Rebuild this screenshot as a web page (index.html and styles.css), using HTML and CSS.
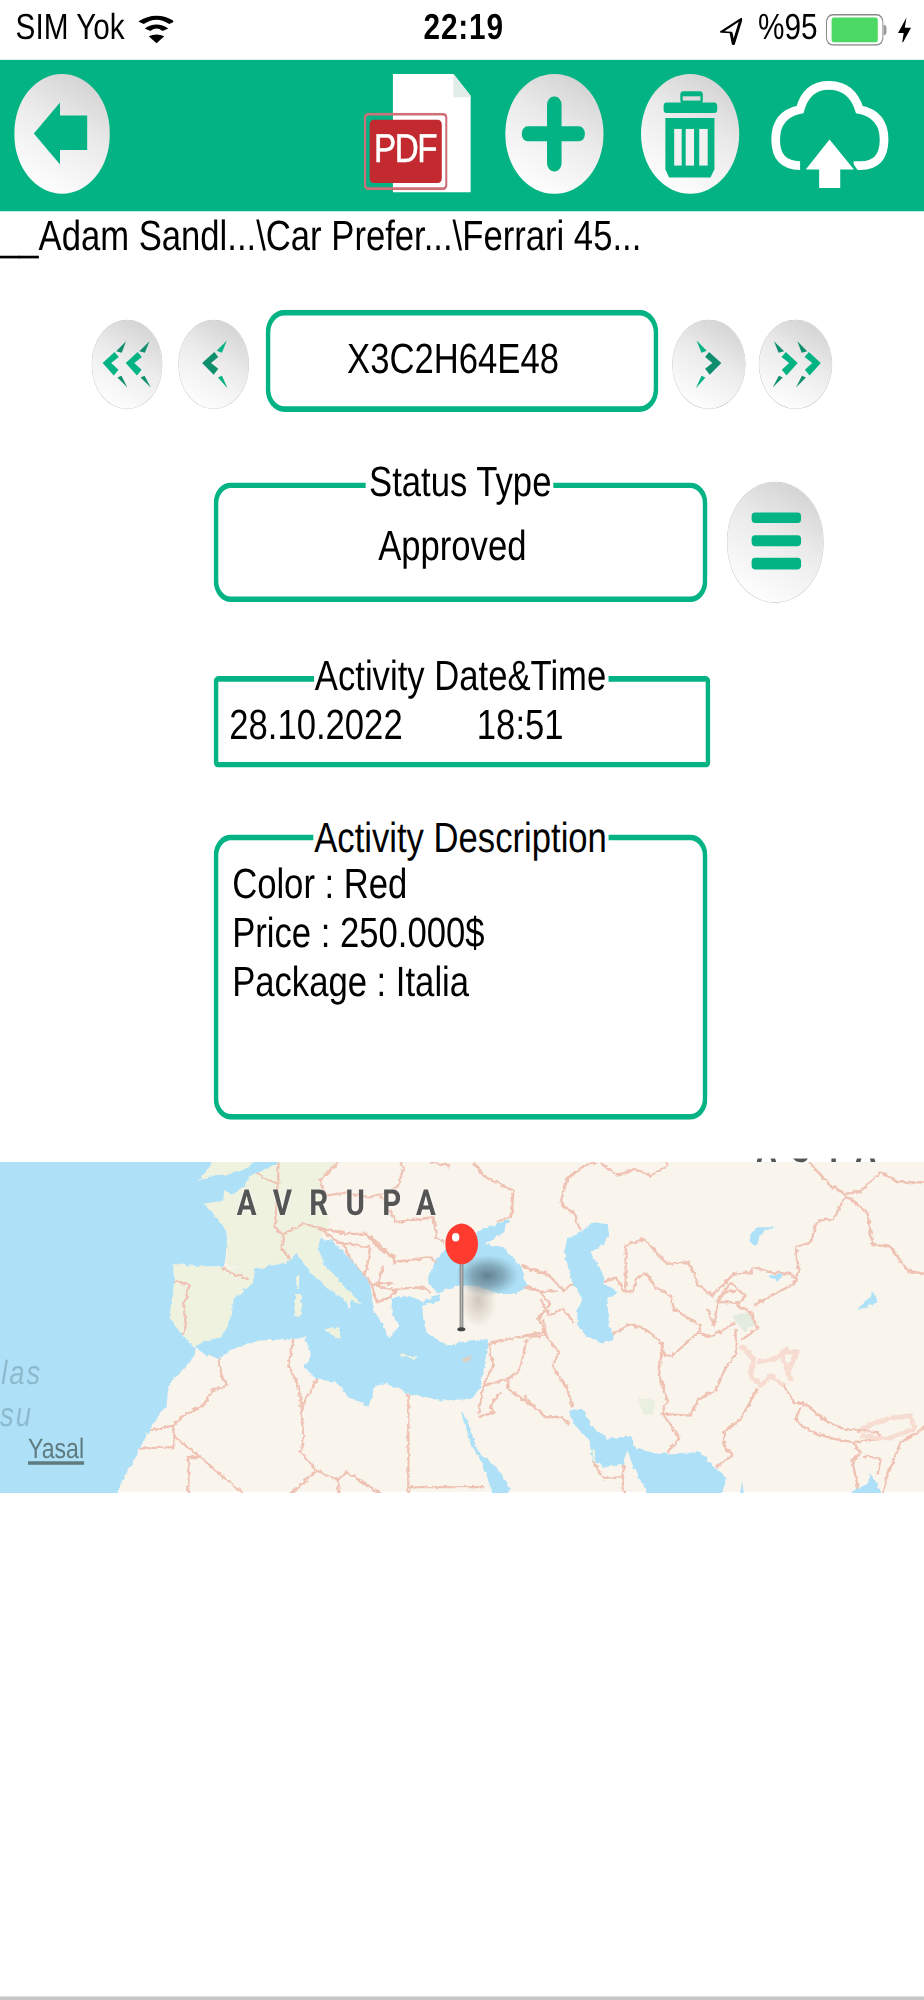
FILE: index.html
```html
<!DOCTYPE html>
<html lang="en">
<head>
<meta charset="utf-8">
<title>Activity</title>
<link rel="stylesheet" href="styles.css">
</head>
<body>
<div class="screen">
  <header class="statusbar">
    <div class="sb-left">
      <span>SIM Yok</span>
      <svg class="wifi" viewBox="0 0 60 90" preserveAspectRatio="none"><path d="M4 26Q30 -4 56 26M15 47Q30 28 45 47" fill="none" stroke="#000" stroke-width="12"/><path d="M30 88L17 67Q30 56 43 67Z"/></svg>
    </div>
    <div class="sb-clock">22:19</div>
    <div class="sb-right">
      <svg class="locarrow" viewBox="0 0 40 85" preserveAspectRatio="none"><path d="M37 4L4 43L20 45L24 80Z" fill="none" stroke="#000" stroke-width="5" stroke-linejoin="round"/></svg>
      <span class="pct">%95</span>
      <div class="batt"><div class="batt-fill"></div></div>
      <div class="batt-nub"></div>
      <svg class="bolt" viewBox="0 0 23 80" preserveAspectRatio="none"><path d="M15 0L0 46H10L7 80L23 30H12Z"/></svg>
    </div>
  </header>

  <nav class="topbar">
    <button class="orb orb-lg" type="button">
      <svg viewBox="0 0 100 100" preserveAspectRatio="none"><polygon class="g" points="20,50 47,24 47,35 75,35 75,64 47,64 47,76"/></svg>
    </button>
    <div class="tools">
      <div class="pdf">
        <svg class="pdf-doc" viewBox="0 0 238 355" preserveAspectRatio="none"><polygon fill="#fff" points="0,0 183,0 238,70 238,355 0,355"/><polygon fill="#e0ece8" points="183,0 238,70 183,70"/></svg>
        <div class="pdf-badge"><span class="pdf-label">PDF</span></div>
      </div>
      <button class="orb orb-lg" type="button">
        <svg viewBox="0 0 100 100" preserveAspectRatio="none"><rect class="g" x="43" y="19" width="15" height="63" rx="7"/><rect class="g" x="17" y="44" width="65" height="12.6" rx="6"/></svg>
      </button>
      <button class="orb orb-lg orb-trash" type="button">
        <svg viewBox="0 0 100 100" preserveAspectRatio="none"><rect class="g" x="40" y="14.6" width="23" height="10.4" rx="3"/><rect x="42.5" y="18.8" width="18" height="3.6" fill="#dcdcdc"/><rect class="g" x="23" y="24" width="54.6" height="8.8" rx="3"/><polygon class="g" points="24.8,37 74.8,37 74.8,80 70.7,87 28.6,87 24.8,80"/><rect x="33.8" y="46.2" width="7.6" height="30.8" fill="#f1f1f1"/><rect x="45.5" y="46.2" width="8.5" height="30.8" fill="#f1f1f1"/><rect x="59.3" y="46.2" width="8.6" height="30.8" fill="#f1f1f1"/></svg>
      </button>
      <svg class="cloud" viewBox="0 0 352 320" preserveAspectRatio="none"><path d="M87 253Q14 253 14 175Q14 100 87 85Q107 13 172 13Q242 13 264 85Q338 100 338 175Q338 253 267 253H247" fill="none" stroke="#fff" stroke-width="26"/><polygon fill="#03b384" points="175,155 88,270 262,270"/><polygon fill="#fff" points="175,175 104,265 144,265 144,320 207,320 207,265 248,265"/></svg>
    </div>
  </nav>

  <div class="crumbs">__Adam Sandl...\Car Prefer...\Ferrari 45...</div>

  <section class="pager">
    <button class="orb orb-sm" type="button">
      <svg viewBox="35 28 217 262" preserveAspectRatio="none"><polygon class="g" points="66,155 102,122 115,137 92,155 114,175 100,192"/><polygon class="g" points="136,155 172,122 185,137 162,155 184,175 170,192"/><polygon class="d" points="107,120 137,90 124,124"/><polygon class="d" points="177,120 208,90 194,124"/><polygon class="d" points="111,198 123,193 141,228"/><polygon class="d" points="181,198 193,193 212,228"/></svg>
    </button>
    <button class="orb orb-sm" type="button">
      <svg viewBox="295 28 217 262" preserveAspectRatio="none"><polygon class="d" points="365,155 402,122 414,137 392,155 414,172 400,190"/><polygon class="g" points="409,118 440,88 425,124"/><polygon class="g" points="413,198 425,193 442,230"/></svg>
    </button>
    <div class="code-box">X3C2H64E48</div>
    <button class="orb orb-sm flip" type="button">
      <svg viewBox="295 28 217 262" preserveAspectRatio="none"><polygon class="d" points="365,155 402,122 414,137 392,155 414,172 400,190"/><polygon class="g" points="409,118 440,88 425,124"/><polygon class="g" points="413,198 425,193 442,230"/></svg>
    </button>
    <button class="orb orb-sm flip" type="button">
      <svg viewBox="35 28 217 262" preserveAspectRatio="none"><polygon class="g" points="66,155 102,122 115,137 92,155 114,175 100,192"/><polygon class="g" points="136,155 172,122 185,137 162,155 184,175 170,192"/><polygon class="d" points="107,120 137,90 124,124"/><polygon class="d" points="177,120 208,90 194,124"/><polygon class="d" points="111,198 123,193 141,228"/><polygon class="d" points="181,198 193,193 212,228"/></svg>
    </button>
  </section>

  <section class="status-row">
    <div class="field field-status">
      <span class="legend">Status Type</span>
      <div class="status-value">Approved</div>
    </div>
    <button class="orb orb-menu" type="button">
      <svg viewBox="0 0 100 100" preserveAspectRatio="none"><rect class="g" x="24.7" y="25.6" width="51" height="9" rx="3.5"/><rect class="g" x="24.7" y="44.9" width="51" height="9.4" rx="3.5"/><rect class="g" x="24.7" y="64" width="51" height="10" rx="3.5"/></svg>
    </button>
  </section>

  <section class="field field-date">
    <span class="legend">Activity Date&amp;Time</span>
    <div class="date-value"><span>28.10.2022</span><span>18:51</span></div>
  </section>

  <section class="field field-desc">
    <span class="legend">Activity Description</span>
    <div class="desc-line">Color : Red</div>
    <div class="desc-line">Price : 250.000$</div>
    <div class="desc-line">Package : Italia</div>
  </section>

  <section class="map">
    <svg class="map-art" viewBox="0 0 2772 990" preserveAspectRatio="none">
      <defs>
        <filter id="rough" filterUnits="userSpaceOnUse" x="-20" y="-20" width="2812" height="1030">
          <feTurbulence type="fractalNoise" baseFrequency=".07" numOctaves="2" seed="4" result="n"/>
          <feDisplacementMap in="SourceGraphic" in2="n" scale="14" xChannelSelector="R" yChannelSelector="G"/>
        </filter>
        <radialGradient id="shadowSea"><stop offset="0" stop-color="#55707c" stop-opacity=".85"/><stop offset=".5" stop-color="#5f7d8a" stop-opacity=".55"/><stop offset="1" stop-color="#6f8f9c" stop-opacity="0"/></radialGradient>
        <radialGradient id="shadowLand"><stop offset="0" stop-color="#a39a8c" stop-opacity=".5"/><stop offset="1" stop-color="#a39a8c" stop-opacity="0"/></radialGradient>
        <linearGradient id="stem" x1="0" x2="1" y1="0" y2="0"><stop offset="0" stop-color="#777"/><stop offset=".5" stop-color="#b5b5b5"/><stop offset="1" stop-color="#777"/></linearGradient>
      </defs>
      <rect width="2772" height="990" fill="#f9f4ec"/>
      <g filter="url(#rough)">
        <g transform="translate(450,-9)">
          <g fill="#eef2df">
            <polygon points="160,135 220,125 222,95 250,105 280,85 300,50 385,10 560,10 510,70 525,130 540,200 510,240 505,270 525,320 575,375 635,435 590,430 530,385 480,340 440,285 410,310 370,320 315,330 230,320 232,220 195,170"/>
            <polygon points="70,315 315,330 310,370 250,420 245,470 215,535 165,545 135,565 95,525 58,475 72,370"/>
          </g>
          <g class="borders">
            <polyline points="215,325 250,345 300,360"/>
            <polyline points="70,365 120,378 100,440 108,500 95,530"/>
            <polyline points="305,30 340,55 385,75"/>
            <polyline points="385,10 385,80 380,130 375,190 380,215 400,225 395,270 420,300"/>
            <polyline points="565,10 510,65 530,110 590,100 660,115 740,90 760,30 750,10"/>
            <polyline points="970,10 1000,50 1090,95 1085,170 1040,190"/>
            <polyline points="840,10 900,20"/>
            <polyline points="400,225 460,195 520,210 590,225 650,225 690,270 735,295 730,310 840,295 860,310"/>
            <polyline points="510,205 560,250 660,265 650,330 640,350"/>
            <polyline points="580,255 600,300 640,350 665,375 730,375"/>
            <polyline points="660,230 730,300"/>
            <polyline points="665,375 680,430 720,415 740,390 820,385 840,400"/>
            <polyline points="700,320 680,380 740,395"/>
            <polyline points="690,110 740,190 850,175 860,240 885,250"/>
            <polyline points="1130,380 1165,395 1200,435 1165,480 1190,530 1100,535 1015,555"/>
            <polyline points="1115,320 1200,350"/>
            <polyline points="205,598 215,650 232,680 185,695 165,735 100,770 70,800 0,815"/>
            <polyline points="70,800 70,865 -60,870"/>
            <polyline points="70,830 150,895 280,1005"/>
            <polyline points="150,895 115,895 115,1005"/>
            <polyline points="430,540 415,620 445,680 455,750 460,850 450,880 500,935 420,1005"/>
            <polyline points="500,935 565,965 590,940 690,1005"/>
            <polyline points="565,965 565,1005"/>
            <polyline points="500,660 455,745"/>
            <polyline points="775,705 775,1005"/>
            <polyline points="775,985 1000,985"/>
            <polyline points="1015,555 1030,620 1000,680 985,765"/>
            <polyline points="1130,540 1110,630 1075,660 1000,680"/>
            <polyline points="1075,660 1075,690 1200,780"/>
            <polyline points="1050,700 1020,745 1035,760 985,775"/>
          </g>
          <g class="water">
            <polygon points="-460,-20 385,-20 385,10 350,30 300,50 280,85 250,105 222,95 220,125 160,135 195,170 232,220 225,322 150,322 70,315 72,370 58,475 95,525 130,562 138,575 120,610 85,645 55,680 50,740 0,810 -105,1010 -460,1010"/>
            <polygon points="135,565 165,545 215,535 245,470 250,420 310,370 315,330 370,320 410,310 440,285 480,340 530,385 590,430 605,470 590,505 600,450 600,420 635,435 575,375 525,320 505,270 510,240 545,245 610,310 660,375 672,455 700,500 715,540 735,520 745,490 725,470 725,420 770,410 815,425 820,480 830,520 890,560 960,545 1015,540 1005,610 990,690 965,720 880,725 780,705 710,675 675,680 655,745 590,710 560,670 500,660 460,625 485,590 465,535 430,540 330,545 260,565 205,598 170,590"/>
            <polygon points="835,350 860,300 890,265 960,250 985,215 1080,180 1060,220 1005,255 1060,265 1110,320 1132,380 1100,405 1050,405 990,382 930,378 860,402 835,375"/>
            <polygon points="805,435 870,405 870,425 820,440"/>
            <polygon points="932,755 945,770 985,880 1040,925 1078,985 1078,1010 1030,1010 1000,920 960,850"/>
          </g>
          <g class="land">
            <polygon points="145,65 175,30 195,-10 330,-10 290,30 240,45 190,50"/>
            <polygon points="438,350 448,350 447,390 440,390"/>
            <polygon points="436,405 452,405 455,470 432,470"/>
            <polygon points="520,510 570,505 570,540"/>
            <polygon points="750,585 800,595 795,600 755,592"/>
          </g>
        </g>
        <g transform="translate(1572,-9)">
          <polygon fill="#e2ebdd" points="625,470 680,460 695,490 660,520"/>
          <polygon fill="#e9f0e0" points="340,715 395,725 385,770 360,770"/>
          <g class="borders">
            <polyline points="170,215 150,165 110,130 130,60 180,20 220,10"/>
            <polyline points="230,10 280,50 330,30 380,50 430,20 425,5"/>
            <polyline points="850,5 920,80 965,105 1010,95 1070,40 1120,70 1205,70"/>
            <polyline points="965,110 930,180 880,185 860,250 815,265 825,340 810,375 730,415 690,440"/>
            <polyline points="965,110 1030,160 1045,255 1100,265 1150,335 1205,345"/>
            <polyline points="305,400 305,260 360,240 430,315 495,310 525,380 565,410 630,345 680,340 690,325 740,340 800,345 820,365"/>
            <polyline points="240,370 275,355 300,400 330,395 335,360 365,340 395,385 440,410 450,450 530,500 525,520 560,535 620,500 635,490"/>
            <polyline points="265,525 320,495 370,515 415,555 420,590 445,590 490,550 525,520"/>
            <polyline points="415,555 405,650 430,720 415,765 500,770 525,720 575,695 600,635 635,585 635,510"/>
            <polyline points="415,765 455,820 465,840 430,880"/>
            <polyline points="550,450 570,500 580,430 620,370 665,410 640,440 680,460 700,510 650,545"/>
            <polyline points="575,430 650,430"/>
            <polyline points="600,400 640,395"/>
            <polyline points="700,690 650,780 600,820 600,860 625,890 575,925"/>
            <polyline points="780,680 810,730 850,740 910,790 960,810 1000,815 1060,820 1070,840 985,850 930,840 880,825 830,800 815,780 830,745"/>
            <polyline points="1205,800 1175,825 1130,850 1090,950 1075,1005"/>
            <polyline points="985,850 1010,880 985,905 1005,1005"/>
            <polyline points="1020,890 1070,900 1060,950"/>
            <polyline points="0,325 70,345 120,395 150,370"/>
            <polyline points="0,385 50,400 100,395"/>
            <polyline points="50,420 75,470 115,450 150,490"/>
            <polyline points="60,480 65,530 105,580 85,620 130,690 145,745"/>
            <polyline points="0,530 60,520"/>
            <polyline points="0,710 60,775 115,775 135,800"/>
            <polyline points="205,905 240,960 295,955 300,915"/>
            <polyline points="295,955 300,1005"/>
          </g>
          <g class="borders-wide">
            <polyline points="650,560 690,600 680,650 710,680 740,650 780,680"/>
            <polyline points="770,580 820,580 790,640 800,660 770,580"/>
            <polyline points="700,610 750,600 790,570"/>
            <polyline points="1010,810 1090,780 1160,770 1170,810 1090,840 1010,830"/>
          </g>
          <g class="water">
            <polygon points="170,220 205,190 250,195 255,225 240,255 200,280 235,345 240,375 285,400 250,420 255,500 270,540 230,552 185,530 160,500 160,460 175,420 145,370 120,280 130,240"/>
            <polygon points="675,230 700,205 755,205 720,215 695,265 680,250"/>
            <polygon points="730,350 780,345 760,368"/>
            <polygon points="1000,455 1050,400 1062,430"/>
            <polygon points="135,760 175,745 200,800 250,840 320,830 335,870 400,885 530,880 570,925 610,960 590,1010 375,1010 330,930 310,875 300,915 240,925 205,905 195,840 150,800"/>
            <polygon points="645,1010 655,970 660,1010"/>
            <polygon points="960,1010 1030,975 1040,945 1065,985 1075,1010"/>
          </g>
          <polygon class="land" points="205,870 213,875 213,910 207,905"/>
        </g>
      </g>
      <g transform="translate(450,-9)">
        <polygon fill="#d8d0c4" points="935,600 965,588 960,605 942,612"/>
        <ellipse cx="985" cy="425" rx="55" ry="80" fill="url(#shadowLand)"/>
        <ellipse cx="1012" cy="350" rx="95" ry="62" fill="url(#shadowSea)"/>
        <rect x="929" y="315" width="11" height="195" fill="url(#stem)"/>
        <ellipse cx="934" cy="511" rx="12" ry="6" fill="#444"/>
        <ellipse cx="935" cy="255" rx="49" ry="61" fill="#ff3b2f"/>
        <ellipse cx="917" cy="235" rx="11" ry="13" fill="#fff"/>
      </g>
    </svg>
    <span class="label-continent label-avrupa">AVRUPA</span>
    <div class="asya-clip"><span class="label-continent label-asya">ASYA</span></div>
    <span class="label-ocean label-las">las</span>
    <span class="label-ocean label-su">su</span>
    <span class="legal">Yasal</span>
  </section>

  <div class="spacer"></div>
  <div class="bottom-edge"></div>
</div>
</body>
</html>
```
FILE: styles.css
```css
* { box-sizing: border-box; }
html {
  background: #fff;
}
body {
  margin: 0;
  padding: 0;
  width: 924px;
  height: 2000px;
  overflow: hidden;
}
.screen {
  width: 320px;
  height: 568px;
  display: flex;
  flex-direction: column;
  font-family: "Liberation Sans", Arial, sans-serif;
  font-size: 12px;
  line-height: 14px;
  color: #000;
  text-rendering: geometricPrecision;
  transform: scale(2.8875, 3.5211);
  transform-origin: 0 0;
}

/* status bar */
.statusbar {
  height: 17px;
  display: grid;
  grid-template-columns: 1fr auto 1fr;
  align-items: center;
  padding: 0 4.2px 0 5.4px;
  font-size: 10.3px;
  line-height: 12px;
}
.sb-left { display: flex; align-items: center; gap: 4.6px; }
.wifi { width: 12.4px; height: 8.5px; }
.sb-clock { font-weight: 700; letter-spacing: .3px; }
.sb-right { display: flex; align-items: center; justify-content: flex-end; }
.locarrow { width: 8.3px; height: 8px; margin-right: 5.4px; }
.pct { margin-right: 3px; }
.batt {
  width: 19.4px;
  height: 9.4px;
  padding: 1.6px 1.4px;
  border-radius: 2.4px;
  box-shadow: inset 0 0 0 .4px #8a8a8a;
}
.batt-fill { height: 100%; background: #4cd964; border-radius: .8px; }
.batt-nub { width: 1px; height: 3.4px; background: #999; margin-left: .4px; margin-right: 4.4px; border-radius: 0 1px 1px 0; }
.bolt { width: 4.5px; height: 7.6px; }

/* top bar */
.topbar {
  height: 42.6px;
  background: #03b384;
  display: flex;
  align-items: flex-start;
  padding: 4.3px 11.8px 0 4.5px;
}
.tools { margin-left: auto; display: flex; align-items: flex-start; }
.orb {
  display: block;
  margin: 0;
  padding: 0;
  border: 0;
  border-radius: 50%;
  background: linear-gradient(205deg, #d2d2d2 8%, #ebebeb 45%, #fff 92%);
}
.orb svg { display: block; width: 100%; height: 100%; }
.orb .g { fill: #03b384; }
.orb .d { fill: #0f8f6e; }
.orb-lg { width: 33.6px; height: 33.8px; }
.orb-sm { width: 24.8px; height: 25px; margin-top: 1.4px; box-shadow: 0 0 0 .2px #c4c4c4; }
.orb-menu { width: 33.6px; height: 33.4px; margin-top: .4px; box-shadow: 0 0 0 .2px #c4c4c4; flex: none; }
.flip svg { transform: scaleX(-1); }
.orb-trash { margin-left: 13.5px; width: 34px; }
.cloud { width: 40.8px; height: 30.4px; margin: 2px 0 0 11.4px; }

.pdf { position: relative; width: 37.8px; height: 33.6px; margin-right: 11.8px; }
.pdf-doc { position: absolute; left: 10.4px; top: 0; width: 27.4px; height: 33.6px; }
.pdf-badge {
  position: absolute;
  left: .6px;
  top: 10.5px;
  width: 28.8px;
  height: 22px;
  padding: 2px;
  border-radius: 1.6px;
  box-shadow: inset 0 0 0 .8px #cf6f78;
  display: flex;
}
.pdf-label {
  flex: 1;
  background: #c22a30;
  border-radius: 1.4px;
  color: #fff;
  font-size: 11.5px;
  line-height: 18px;
  letter-spacing: -.5px;
  text-align: center;
  -webkit-text-stroke: .15px #fff;
}

/* breadcrumb */
.crumbs {
  height: 28.2px;
  padding-top: .4px;
  white-space: nowrap;
}

/* pager */
.pager {
  height: 29.6px;
  display: flex;
  align-items: center;
  gap: 5.2px;
  padding-left: 31.7px;
}
.code-box {
  width: 136px;
  height: 29.6px;
  border-radius: 6.5px;
  box-shadow: inset 0 0 0 1.6px #03b384;
  text-align: center;
  line-height: 29.6px;
  padding-right: 5.5px;
}

/* fields */
.field {
  position: relative;
  border-radius: 6px;
  box-shadow: inset 0 0 0 1.6px #03b384;
}
.legend {
  position: absolute;
  left: 50%;
  top: -6.8px;
  transform: translateX(-50%);
  background: #fff;
  padding: 0 .8px;
  white-space: nowrap;
}
.status-row {
  margin: 19.6px 0 0 74px;
  display: flex;
  align-items: flex-start;
  gap: 7.1px;
}
.field-status { width: 170.8px; height: 33.8px; padding: 11.1px 5.5px 0 0; text-align: center; }
.field-date {
  width: 172px;
  height: 26.4px;
  margin: 21px 0 0 73.5px;
  border-radius: 1.6px;
  padding: 7.2px 0 0 5.9px;
}
.date-value { display: flex; gap: 25.7px; }
.field-desc {
  width: 171px;
  height: 80.7px;
  margin: 19.3px 0 0 74px;
  padding: 6.6px 0 0 6.4px;
}
.desc-line { line-height: 14.2px; }

/* map */
.map {
  position: relative;
  height: 93.7px;
  margin-top: 11.9px;
}
.map-art { display: block; width: 100%; height: 100%; filter: blur(.2px); }
.borders polyline { fill: none; stroke: #efc2b3; stroke-width: 7; stroke-linejoin: round; }
.borders-wide polyline { fill: none; stroke: #f7dcd1; stroke-width: 14; stroke-linejoin: round; }
.water { fill: #aee1f7; }
.land { fill: #f0f2e0; }
.label-continent {
  position: absolute;
  font-family: Roboto, "Liberation Sans", sans-serif;
  font-weight: 700;
  font-size: 10.2px;
  line-height: 10.2px;
  letter-spacing: 6px;
  color: #555;
  text-shadow: 0 0 1px #fff;
}
.label-avrupa { left: 82px; top: 8.4px; }
.asya-clip {
  position: absolute;
  left: 262px;
  top: -1.5px;
  width: 50px;
  height: 3.3px;
  overflow: hidden;
}
.label-asya { left: 0; top: -5.3px; letter-spacing: 5.2px; }
.label-ocean {
  position: absolute;
  font-style: italic;
  font-size: 9.5px;
  line-height: 10px;
  letter-spacing: .7px;
  color: #8db9cc;
}
.label-las { left: .4px; top: 55.6px; }
.label-su { left: 0; top: 67.5px; }
.legal {
  position: absolute;
  left: 9.7px;
  top: 77px;
  font-size: 8px;
  line-height: 9px;
  color: #5f7b80;
  text-decoration: underline;
}

.spacer { flex: 1; }
.bottom-edge { height: 1.4px; background: #c6c6c6; }
```
